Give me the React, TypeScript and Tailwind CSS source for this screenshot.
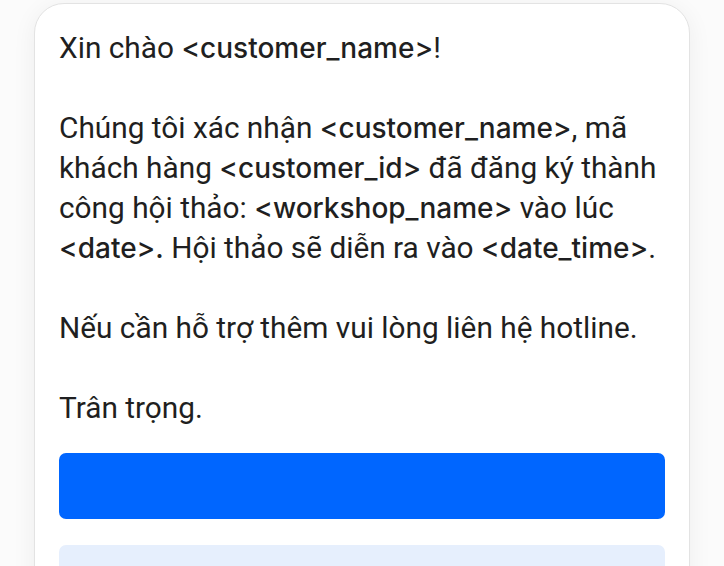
import React from 'react';

const Tag: React.FC<{ children: React.ReactNode }> = ({ children }) => (
  <span className="font-['Inter',sans-serif] text-[28px] font-medium">{children}</span>
);

const App: React.FC = () => {
  return (
    <div className="min-h-[566px] w-[724px] bg-[#fbfbfb] overflow-hidden">
      <div className="ml-[34px] mt-[3px] w-[656px] rounded-[30px] border border-[#e3e3e3] bg-white p-6 shadow-[0_4px_24px_rgba(0,0,0,0.06)]">
        {/* Message body */}
        <div className="font-['Roboto',sans-serif] text-[29.8px] leading-[40px] text-[#1f1f21]">
          <p className="mb-10">
            Xin chào <Tag>&lt;customer_name&gt;</Tag>!
          </p>
          <p className="mb-10">
            Chúng tôi xác nhận <Tag>&lt;customer_name&gt;</Tag>, mã
            <br />
            khách hàng <Tag>&lt;customer_id&gt;</Tag> đã đăng ký thành
            <br />
            công hội thảo: <Tag>&lt;workshop_name&gt;</Tag> vào lúc
            <br />
            <Tag>&lt;date&gt;.</Tag> Hội thảo sẽ diễn ra vào <Tag>&lt;date_time&gt;</Tag>.
          </p>
          <p className="mb-10">Nếu cần hỗ trợ thêm vui lòng liên hệ hotline.</p>
          <p>Trân trọng.</p>
        </div>

        {/* Actions */}
        <div className="mt-[25px] flex flex-col gap-[26px]">
          <button className="h-[66px] w-full rounded-[7px] bg-[#0066ff]" />
          <button className="h-[66px] w-full rounded-[7px] bg-[#e6effd]" />
        </div>
      </div>
    </div>
  );
};

export default App;
